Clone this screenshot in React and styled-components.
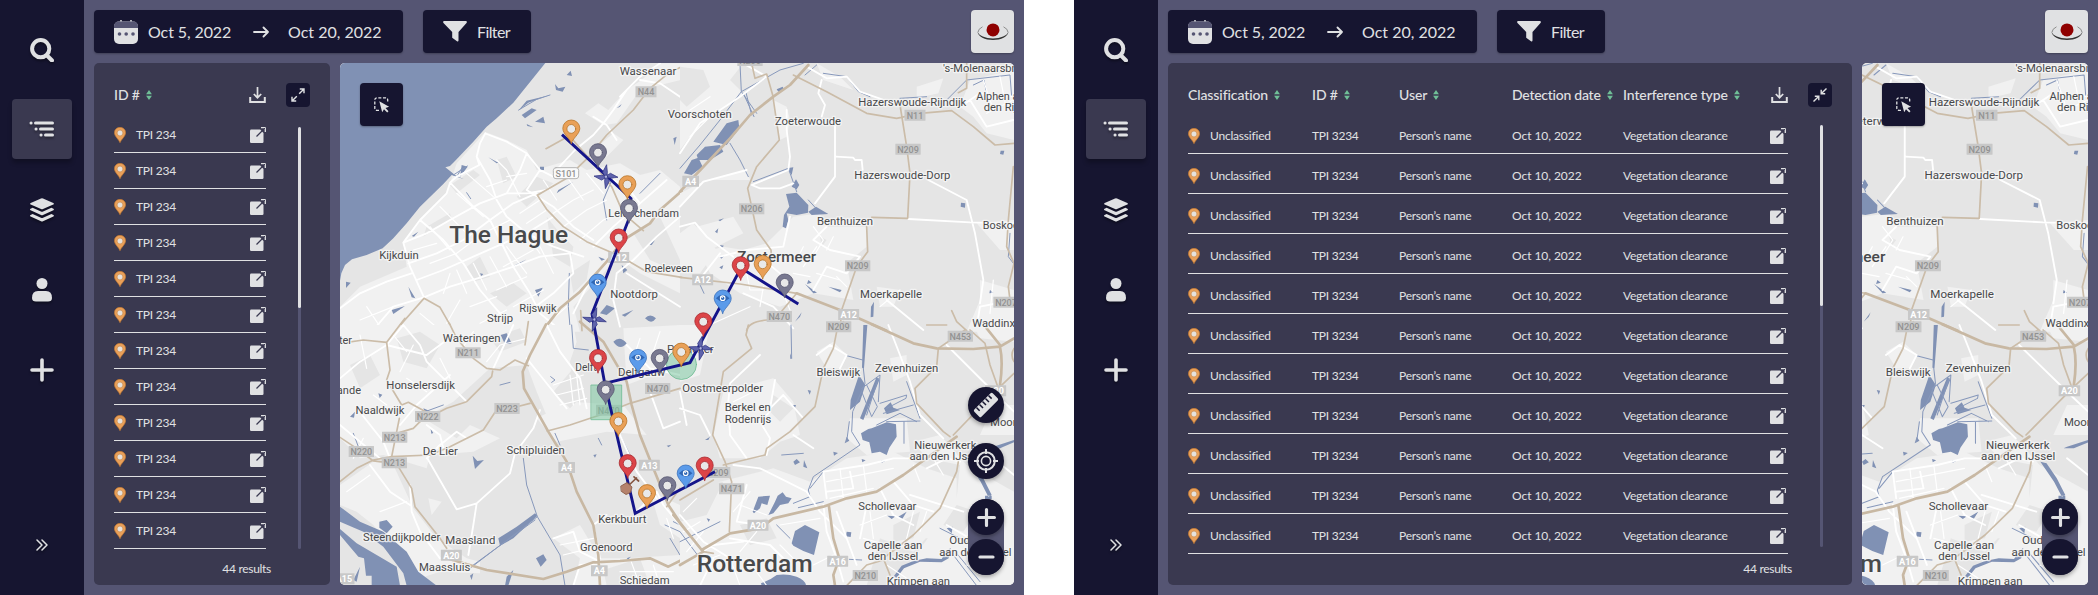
import React from "react";
import styled, { createGlobalStyle } from "styled-components";

const c = {
  navy: "#161530",
  slate: "#555573",
  panel: "#3a3950",
  light: "#e0e1e3",
  green: "#6fbf97",
  orange: "#e9a05a",
};

const Global = createGlobalStyle`
  * { box-sizing: border-box; }
  body { margin: 0; background: #fff; font-family: Lato, "Liberation Sans", sans-serif; color: ${c.light}; }
  svg { display: block; flex: none; }
`;

const Page = styled.div`
  display: flex;
  justify-content: space-between;
  width: 2098px;
  height: 595px;
  overflow: hidden;
`;
const Screen = styled.section`
  display: flex;
  width: 1024px;
  height: 595px;
  background: ${c.slate};
`;
const Sidebar = styled.nav`
  display: flex;
  flex-direction: column;
  align-items: center;
  gap: 20px;
  width: 84px;
  padding: 19px 0 20px;
  background: ${c.navy};
`;
const NavItem = styled.div`
  display: flex;
  align-items: center;
  justify-content: center;
  width: 60px;
  height: 60px;
  padding-top: ${(p) => (p.$active ? 0 : 2)}px;
  border-radius: 4px;
  background: ${(p) => (p.$active ? c.panel : "transparent")};
  box-shadow: ${(p) => (p.$active ? "0 4px 4px rgba(0,0,0,.25)" : "none")};
  svg { filter: drop-shadow(0 2px 1px rgba(0, 0, 0, 0.35)); }
`;
const NavFooter = styled(NavItem)`
  margin-top: auto;
  padding-top: 0;
`;
const Main = styled.main`
  display: flex;
  flex-direction: column;
  flex: 1;
  gap: 10px;
  padding: 10px;
`;
const TopBar = styled.header`
  display: flex;
  gap: 20px;
  height: 43px;
`;
const BarBox = styled.div`
  display: flex;
  align-items: center;
  height: 43px;
  width: ${(p) => p.$w}px;
  padding-left: 20px;
  border-radius: 4px;
  background: ${c.navy};
  box-shadow: 0 1px 2px rgba(0, 0, 0, 0.25);
`;
const BarText = styled.span`
  width: ${(p) => p.$w}px;
  margin-left: ${(p) => p.$ml}px;
  padding-top: ${(p) => p.$pt || 0}px;
  font-size: 16px;
  line-height: 20px;
  letter-spacing: ${(p) => p.$ls ?? 0}px;
  white-space: nowrap;
`;
const LogoBox = styled.div`
  display: flex;
  align-items: center;
  justify-content: center;
  width: 43px;
  height: 43px;
  margin-left: auto;
  border-radius: 4px;
  background: ${c.light};
  box-shadow: 0 1px 2px rgba(0, 0, 0, 0.25);
`;
const Content = styled.div`
  display: flex;
  gap: 10px;
  height: 522px;
`;
const Panel = styled.div`
  width: ${(p) => p.$w}px;
  height: 522px;
  padding: 20px 20px 0;
  border-radius: 5px;
  background: ${c.panel};
`;
const PanelHead = styled.div`
  display: flex;
  align-items: center;
  height: 24px;
`;
const HeadCell = styled.div`
  display: flex;
  align-items: center;
  gap: 6px;
  width: ${(p) => p.$w}px;
  font-size: 14px;
  font-weight: 500;
  line-height: 20px;
  letter-spacing: ${(p) => p.$ls ?? -0.1}px;
  white-space: nowrap;
`;
const SquareButton = styled.div`
  display: flex;
  align-items: center;
  justify-content: center;
  width: 24px;
  height: 24px;
  margin-left: 20px;
  border-radius: 4px;
  background: ${c.navy};
`;
const ListArea = styled.div`
  display: flex;
  margin-top: ${(p) => (p.$wide ? 7 : 10)}px;
`;
const Rows = styled.div`
  width: ${(p) => p.$w}px;
`;
const Row = styled.div`
  display: flex;
  align-items: center;
  height: ${(p) => p.$h}px;
  padding-top: ${(p) => p.$pt}px;
  border-bottom: 1px solid ${c.light};
`;
const Cell = styled.span`
  width: ${(p) => p.$w}px;
  font-size: 12px;
  line-height: 16px;
  letter-spacing: ${(p) => p.$ls ?? -0.25}px;
  white-space: nowrap;
`;
const PinSlot = styled.span`
  width: 22px;
`;
const OpenSlot = styled.span`
  margin-left: auto;
  margin-right: ${(p) => p.$mr || 0}px;
`;
const Track = styled.div`
  width: 3px;
  height: 422px;
  margin: ${(p) => (p.$wide ? "11px 0 0 32px" : "10px 0 0 32px")};
  border-radius: 2px;
  background: ${c.slate};
`;
const Thumb = styled.div`
  height: 181px;
  border-radius: 2px;
  background: ${c.light};
`;
const Results = styled.div`
  width: ${(p) => p.$w}px;
  margin-top: ${(p) => p.$mt}px;
  text-align: right;
  font-size: 12px;
  line-height: 16px;
  letter-spacing: -0.3px;
`;
const MapBox = styled.div`
  position: relative;
  flex: 1;
  height: 522px;
  border-radius: 5px;
  overflow: hidden;
  background: #e5e5e5;
`;
const SelectTool = styled.div`
  position: absolute;
  left: 20px;
  top: 20px;
  display: flex;
  align-items: center;
  justify-content: center;
  width: 43px;
  height: 43px;
  border-radius: 4px;
  background: ${c.navy};
  box-shadow: 0 1px 2px rgba(0, 0, 0, 0.3);
`;
const MapTools = styled.div`
  position: absolute;
  right: 10px;
  bottom: 10px;
  display: flex;
  flex-direction: column;
  gap: 20px;
`;
const RoundButton = styled.div`
  display: flex;
  align-items: center;
  justify-content: center;
  width: 36px;
  height: 36px;
  border-radius: 50%;
  background: ${c.navy};
  box-shadow: 0 2px 4px rgba(0, 0, 0, 0.35);
`;
const ZoomGroup = styled.div`
  display: flex;
  flex-direction: column;
  gap: 4px;
  border-radius: 18px;
  background: ${c.slate};
`;

/* ---------- icons ---------- */
const SearchIcon = () => (
  <svg width="24" height="24" viewBox="0 0 24 24" fill="none" stroke={c.light}>
    <circle cx="10.7" cy="10.7" r="8.6" strokeWidth="4" />
    <path d="M17 17.5l5 5" strokeWidth="4" strokeLinecap="round" />
  </svg>
);
const ListIcon = () => (
  <svg width="26" height="16" viewBox="0 0 26 16" fill="none" stroke={c.light} strokeWidth="3" strokeLinecap="round">
    <path d="M2 2h.1M6.5 2h17M7 8h.1M11.500 8h12M12 14h.1M16.500 14h7" />
  </svg>
);
const LayersIcon = () => (
  <svg width="24" height="24" viewBox="0 0 24 24" fill={c.light}>
    <path d="M11 .4q1-.5 2 0l10.300 4.500q1.300.8 0 1.600L13 11q-1 .5-2 0L.7 6.500q-1.300-.8 0-1.600z" />
    <path d="M2.600 9.800l8.300 3.700q1.100.5 2.200 0l8.300-3.700 2 .9q1.200.8 0 1.500L13 17q-1 .5-2 0L.6 12.200q-1.200-.8 0-1.500z" />
    <path d="M2.600 16.100l8.300 3.700q1.100.5 2.200 0l8.300-3.700 2 .9q1.200.8 0 1.500L13 23.300q-1 .5-2 0L.6 18.500q-1.200-.8 0-1.500z" />
  </svg>
);
const UserIcon = () => (
  <svg width="20" height="24" viewBox="0 0 20 24" fill={c.light}>
    <circle cx="10" cy="5.500" r="5.500" />
    <path d="M6 13h8q6 0 6 7 0 3.500-4 3.500H4q-4 0-4-3.500 0-7 6-7z" />
  </svg>
);
const PlusIcon = ({ size = 24, w = 3.6 }) => (
  <svg width={size} height={size} viewBox="0 0 24 24" stroke={c.light} strokeWidth={w} strokeLinecap="round">
    <path d="M12 2v20M2 12h20" />
  </svg>
);
const ChevronsIcon = () => (
  <svg width="12" height="12" viewBox="0 0 12 12" fill="none" stroke={c.light} strokeWidth="1.500" strokeLinecap="round" strokeLinejoin="round">
    <path d="M1 1l5 5-5 5M6 1l5 5-5 5" />
  </svg>
);
const CalendarIcon = () => (
  <svg width="24" height="24" viewBox="0 0 24 24">
    <path d="M7 0v4M17 0v4" stroke={c.light} strokeWidth="1.500" />
    <rect y="1.500" width="24" height="22.500" rx="5" fill={c.light} />
    <path d="M0 8V6.500q0-5 5-5h14q5 0 5 5V8z" fill={c.slate} />
    <g fill={c.slate}>
      <circle cx="5.500" cy="14" r="1.800" />
      <circle cx="12.200" cy="14" r="1.800" />
      <circle cx="19" cy="14" r="1.800" />
    </g>
  </svg>
);
const ArrowIcon = () => (
  <svg width="16" height="12" viewBox="0 0 16 12" fill="none" stroke={c.light} strokeWidth="1.800" strokeLinecap="round" strokeLinejoin="round">
    <path d="M1 6h14M10.500 1.500L15 6l-4.500 4.500" />
  </svg>
);
const FunnelIcon = () => (
  <svg width="24" height="21" viewBox="0 0 24 21" fill={c.light}>
    <path d="M.8 0h22.400q1.200.8.3 2L15.500 11v8.500q-.2 1.500-1.500.8l-4.800-3.600V11L.5 2Q-.4.8.8 0z" />
  </svg>
);
const LogoIcon = () => (
  <svg width="32" height="18" viewBox="0 0 32 18">
    <path d="M5.500 3.800Q1 6 1 9.300M26.500 3.800Q31 6 31 9.300" fill="none" stroke="#777" strokeWidth=".8" />
    <path d="M.6 8.500C.8 13.800 8 17 16 17s15.200-3.200 15.400-8.500C30.400 12.800 23.500 15.400 16 15.400S1.600 12.800.6 8.500z" fill="#333" />
    <circle cx="16" cy="6.900" r="6.500" fill="#8f0000" />
  </svg>
);
const SortIcon = () => (
  <svg width="6" height="10" viewBox="0 0 6 10" fill={c.green}>
    <path d="M3 0l2.900 4.300H.1zM3 10L.1 5.700h5.800z" />
  </svg>
);
const DownloadIcon = () => (
  <svg width="17" height="16" viewBox="0 0 17 16" fill="none" stroke={c.light} strokeWidth="1.700">
    <path d="M8.500 0v10.500M4.800 7l3.700 3.700L12.200 7" />
    <path d="M1.200 10v5h14.600v-5" strokeWidth="2" />
  </svg>
);
const ResizeIcon = ({ collapse }) => (
  <svg width="14" height="14" viewBox="0 0 14 14" fill="none" stroke={c.light} strokeWidth="1.400">
    {collapse ? (
      <path d="M0.500 13.500L5.600 8.400M1.800 8.200h4v4M13.500.5L8.400 5.600M8.200 1.800v4h4" />
    ) : (
      <path d="M1 13L5.800 8.200M1 8.800V13h4.200M13 1L8.200 5.800M8.800 1H13v4.200" />
    )}
  </svg>
);
const OpenIcon = () => (
  <svg width="16" height="16" viewBox="0 0 16 16">
    <path d="M1.200 2.500h9L13.500 6v8.800q0 1.200-1.200 1.200H1.200Q0 16 0 14.800V3.700q0-1.200 1.200-1.200z" fill={c.light} />
    <path d="M6.500 9.500L14 2" stroke={c.panel} strokeWidth="1.300" />
    <path d="M11 .7h4.300V5" fill="none" stroke={c.light} strokeWidth="1.300" />
    <path d="M10.800 5.200L15.300.7" stroke={c.panel} strokeWidth="1" />
  </svg>
);
const SmallPin = () => (
  <svg width="12" height="16" viewBox="0 0 18 24">
    <path d="M9 23.500C7 18 .6 14 .6 8.600a8.400 8.200 0 0 1 16.800 0C17.400 14 11 18 9 23.500z" fill={c.orange} stroke="#c57a30" strokeWidth="1" />
    <circle cx="9" cy="9" r="4.400" fill="#e6e2de" stroke="#c57a30" strokeWidth=".8" />
  </svg>
);
const SelectIcon = () => (
  <svg width="16" height="16" viewBox="0 0 16 16">
    <path d="M5 13.300H3q-2.200 0-2.200-2.200V3Q.8.8 3 .8h8.500q2.200 0 2.200 2.200v1.500" fill="none" stroke={c.light} strokeWidth="1.300" strokeDasharray="3 1.600" />
    <path d="M5.300 4.300l9.800 5.500-3.600 1.100 3 3.300-1.300 1.300-3.200-3.200-1.800 3z" fill={c.light} />
  </svg>
);
const RulerIcon = () => (
  <svg width="26" height="26" viewBox="0 0 26 26">
    <g transform="rotate(-45 13 13)">
      <rect x="0" y="8" width="26" height="10" rx="1.500" fill={c.light} />
      <path d="M4.500 8v4.500M8.800 8v5M13 8v5M17.200 8v5M21.500 8v4.500" stroke={c.navy} strokeWidth="1.500" />
    </g>
  </svg>
);
const TargetIcon = () => (
  <svg width="24" height="24" viewBox="0 0 24 24" fill="none" stroke={c.light} strokeWidth="2">
    <circle cx="12" cy="12" r="8.800" />
    <circle cx="12" cy="12" r="4.600" strokeWidth="1.600" />
    <path d="M12 0v5M12 19v5M0 12h5M19 12h5" />
  </svg>
);
const MinusIcon = () => (
  <svg width="17" height="4" viewBox="0 0 17 4" stroke={c.light} strokeWidth="3.200" strokeLinecap="round">
    <path d="M2 2h13" />
  </svg>
);

/* ---------- map data: four tiles, three units per pixel ---------- */
const TILES = [
  {
    at: [340, 60],
    urban:
      "M436,216 L350,310 L320,400 L240,480 L190,545 L200,620 L60,680 L0,740 V815 H720 L700,740 L790,640 L830,590 L900,640 L1020,700 V380 L960,330 L900,345 L840,310 L740,330 L690,300 L620,320 L590,330 L560,270 L500,240Z M735,160 L775,130 L805,150 L860,90 L905,60 L960,10 L1022,10 V60 L900,90 L830,190 L790,195Z M760,270 L820,220 L850,240 L800,290Z",
    park:
      "M470,300 L500,290 L530,350 L490,370Z M330,375 L400,330 L420,345 L350,400Z M530,410 L590,350 L640,370 L560,440Z M380,620 L420,590 L450,650 L400,665Z M620,470 L660,520 L700,560 L690,620 L640,590Z M260,500 L330,460 L335,475 L250,530Z M450,700 L520,670 L560,700 L500,740Z M880,520 L960,470 L1020,600 V640 L930,600Z M690,640 L750,600 L740,660 L700,700Z",
    water:
      "M0,9 H616 L520,128 L470,175 L440,200 L400,245 L345,303 L330,318 L316,322 L345,345 L372,358 L335,345 L310,372 L240,440 L200,490 L160,535 L128,565 L80,585 L36,598 L15,615 L4,640 L0,662Z M545,165 L575,145 L590,150 L555,175Z M534,153 L560,122 L628,106 L565,128Z M585,185 L610,170 L615,190Z M560,192 L580,202 L562,198Z M645,72 L655,85 L676,80 L668,95 L648,90Z M680,45 L692,32 L696,48Z M365,315 L383,320 L360,350Z M830,145 L845,132 L840,140Z M600,320 h12 v10 h-12Z M655,390 L700,365 L650,400Z M585,690 L608,683 L595,710Z M18,665 L32,668 L18,684Z M205,680 L226,715 L215,712Z M155,750 L195,738 L160,762Z M445,292 L475,308 L470,310Z M370,400 L390,418Z M520,618 L560,598 L522,622Z M915,775 Q930,758 948,775 Q935,795 915,775Z M800,735 L825,745 L800,765 L780,760Z M845,615 L862,630 L850,640Z M775,590 L795,598 L785,602Z M1010,230 l-6,25 l-4,-20Z M215,528 L235,515 L222,530Z M420,640 l10,2 l-6,6Z M845,765 l35,-15 l-25,20Z M925,555 l20,-14 l-10,14Z",
    thinWater: "M340,345 L382,318 M350,350 L365,325 M820,350 L790,420 L800,480 M690,800 L685,740 L688,640 M380,398 L392,416 M900,400 L960,340 M536,150 L590,118 L630,105",
    minor:
      "M436,220 L420,250 L410,290 L418,315 L350,350 L330,368 L320,400 L240,480 L190,548 L210,620 L252,712 M440,222 L500,245 L560,280 L600,330 L640,350 L700,345 M190,548 L260,520 L330,480 L420,430 L500,400 L560,400 L620,390 M410,290 L450,360 L470,420 L500,470 L560,520 L640,560 L730,590 M330,368 L400,440 L450,480 L480,540 L520,620 L570,700 L600,760 L660,810 M240,480 L310,540 L370,610 L420,690 L480,760 L520,810 M205,610 L290,580 L370,540 L450,480 L520,430 L590,400 M230,660 L310,630 L400,590 L490,550 L560,520 L640,470 M252,712 L330,680 L430,650 L520,620 L600,590 L690,580 L700,640 L640,700 L560,760 M0,745 L60,700 L140,665 L215,640 M100,810 L160,740 L252,712 M560,280 L540,330 L500,400 M600,330 L560,390 L640,440 L700,500 L760,540 M860,90 L820,150 L790,190 L760,225 L705,270 M960,10 L900,50 L840,110 M760,170 L800,195 L830,240 M1020,110 L960,70 L900,60 M705,270 L640,340 M980,360 L900,430 L820,500 L760,560 M900,430 L860,380 L800,350 M1020,470 L950,530 L880,600 L830,640 L820,720 L840,800 M770,640 L740,680 L700,760 M860,640 L940,690 L1020,740",
    fine:
      "M300,440 L380,520 M350,400 L430,470 M380,340 L460,410 M270,500 L330,570 M470,300 L500,330 L540,410 M430,520 L510,480 M350,580 L430,520 M270,610 L350,580 M310,700 L330,640 M380,700 L350,630 M440,690 L400,610 M500,680 L450,590 M560,640 L500,560 M600,580 L550,510 M640,640 L590,540 M490,620 L580,570 M470,690 L560,650 M520,740 L610,690 M390,740 L470,710 M420,790 L500,750 M600,810 L680,740 M640,460 L700,420 L760,390 M670,500 L740,450 L800,420 M720,540 L790,480 L840,460 M610,360 L650,420 M680,350 L730,420 M740,340 L790,400 M220,570 L290,550 M500,350 L560,340 M440,380 L500,360 M240,760 L300,810 M60,780 L160,740 M120,800 L80,740 M320,790 L360,720 M540,460 L600,420 M560,490 L620,450",
    tan: "M672,236 L618,266 M592,406 L680,355 L745,292 L800,225 L880,150 L930,85 L985,40 L1025,20 M592,406 L620,448 L670,500 L740,545 L820,580 M690,230 L760,310 L815,380 L850,460 L910,512 M168,810 L252,715 L300,742 L340,812 M722,752 L726,812 M860,600 L920,635 L1025,652",
    tanWide: "M1025,393 L960,450 L930,490 L850,540 L800,605 L720,695 L660,745 L608,812",
    shields: [["N44", 918, 96], ["S101", 678, 340, "s"], ["A12", 836, 593]],
    labels: [
      ["Wassenaar", 924, 46, 170], ["The Hague", 506, 548, 356, 69], ["Kijkduin", 177, 597, 119], ["Leidschendam", 911, 472, 212],
      ["Roeleveen", 986, 635, 145], ["Nootdorp", 882, 714, 143], ["Rijswijk", 594, 757, 112], ["Strijp", 480, 786, 78], ["Voorschoten", 1079, 174, 192],
    ],
  },
  {
    at: [680, 60],
    urban:
      "M0,10 H190 L150,60 L190,100 L60,190 L0,270Z M280,120 L300,240 L320,230 L330,180 L320,140Z M340,470 L420,460 L440,500 L560,500 L560,560 L500,610 L520,720 L400,700 L300,740 L180,700 L90,640 L60,580 L130,560 L190,570 L260,550 L310,500Z M840,140 L870,60 L1002,30 V240 L920,220 L880,170Z M710,80 L790,55 L775,100 L710,115Z M890,490 L1002,480 V570 L960,570Z M900,660 L1002,690 V815 H860 L900,720Z M0,400 L60,370 L200,330 L210,360 L80,360 L0,440Z M590,680 L660,690 L640,740 L600,740Z M50,500 L160,470 L190,520 L90,570Z M0,520 L40,490 L110,570 L60,640 L0,640Z M410,10 L480,50 L520,90 L430,60Z",
    park: "M0,20 L70,30 L90,80 L20,140 L0,120Z M140,720 L240,730 L220,790 L130,800Z M420,530 L440,540 L425,560Z",
    water:
      "M100,245 L140,190 L175,180 L178,205 L140,255Z M50,285 L75,260 L120,255 L130,275 L90,300 L55,300Z M12,340 L35,300 L55,293 L68,320 L35,345Z M318,402 L350,398 L385,435 L384,458 L350,465 L320,460 L325,480 L318,505 L308,500 L312,465 L328,440Z M385,455 L408,440 L445,462 L395,465Z M320,325 L340,322 L335,345Z M348,358 L358,375 L350,388 L335,380Z M290,88 L308,80 L312,88 L295,95Z M843,428 L856,430 L855,443 L842,440Z M962,272 L973,272 L970,284 L960,282Z M115,480 L132,475 L120,484Z M105,515 L115,505 L112,520Z M120,555 l12,2 l-8,8Z M118,590 l14,-2 l-8,8Z M118,622 l12,-6 l-4,12Z M375,672 L411,698 L400,700Z M385,660 l10,8 l-14,4Z M445,680 L485,690 L480,697Z M345,785 L365,757 L360,770Z M573,740 L582,725 L580,770 L572,772Z M930,690 l10,8 l-12,2Z",
    thinWater: "M180,10 L184,95 L230,160 M190,100 L222,170 M198,98 L215,165 M0,325 L60,255 L120,180 L184,95 L300,30 L370,10 M150,250 L180,300 L205,350 M430,40 L500,50 L535,95 L570,110 M660,115 L740,110 M800,120 L860,60 L990,45 L995,110 M880,75 L912,60 L918,90 M220,365 L325,325 L350,395 M385,420 L408,445 M990,520 L985,590 L1000,610 M58,670 L72,700 M375,45 L410,15",
    minor:
      "M0,280 L60,190 L180,110 L260,50 L190,10 M465,190 V350 L405,430 M468,290 L520,293 L525,300 L545,300 L548,330 M685,477 L870,487 L1002,490 M745,360 L860,420 L885,520 L910,660 L900,730 M320,150 L320,210 L330,290 L325,330 L215,375 L240,385 L300,385 L340,370 M380,20 L440,55 L500,50 L540,95 L640,130 M425,60 L415,100 L435,135 L425,170 M330,470 L310,560 L200,570 L120,590 M440,500 L400,540 L450,570 L540,590 M540,590 L500,640 L440,620 L400,690 M0,500 L45,488 L80,530 L160,590 M180,600 L240,590 L300,640 M50,670 L120,580 M0,440 L70,365 L200,330 M840,140 L900,100 L1000,110 M870,120 L920,200 L1000,180 M620,720 L730,810 M890,800 L900,740 L1002,720 M190,700 L280,740 L340,805",
    fine:
      "M400,500 L430,540 L400,590 M460,530 L440,570 M470,650 L500,680 M410,640 L480,660 M910,60 L940,150 M960,50 L980,150 M920,160 L1000,120 M250,680 L240,740 M200,640 L210,690 L250,690 M310,700 L330,750 M0,170 L90,110 M30,230 L110,150 M100,790 L210,740 M370,620 L410,560 M340,640 L390,650 M350,600 L370,560 M940,660 L930,760 M600,740 L660,690",
    tan: "M215,10 L225,55 L260,42 L278,105 L298,240 L230,320 L203,385 L230,510 L273,570 L275,600 M340,45 L440,95 L560,160 L650,175 L720,160 L815,152 L880,200 L945,255 L1005,250 M660,135 L680,260 L690,340 L683,475 L575,472 M560,500 L563,575 L530,620 L485,750 L480,812 M0,652 L180,672 L350,700 M350,700 L300,760 M860,10 L860,85 L835,98 M1000,320 L985,480 L980,560 L1002,610 L985,680 L990,720 M815,752 L830,785 L860,812 M200,812 Q205,785 260,780",
    tanWide: "M0,395 L75,315 L150,235 L210,165 L280,110 L330,75 L385,15 M350,700 L480,750 L620,812",
    shields: [["N206", 210, 2], ["N11", 705, 166], ["N209", 684, 268], ["A4", 32, 364], ["N206", 215, 447], ["N209", 533, 618], ["A12", 68, 660], ["N470", 298, 770], ["A12", 506, 764], ["N207", 978, 727], ["N209", 476, 801]],
    labels: [
      ["'s-Molenaarsbrug", 916, 37, 254], ["Hazerswoude-Rijndijk", 697, 138, 324], ["Alphen aan", 970, 121, 162], ["den Rijn", 970, 154, 118], ["Zoeterwoude", 384, 194, 198],
      ["Hazerswoude-Dorp", 667, 357, 288], ["Benthuizen", 495, 494, 168], ["Boskoop", 972, 508, 127], ["Zoetermeer", 290, 607, 237, 43], ["Moerkapelle", 633, 714, 186], ["Waddinxveen", 976, 800, 198],
    ],
  },
  {
    at: [340, 325],
    urban:
      "M0,0 H700 L710,50 L690,110 L700,170 L690,250 L640,320 L590,200 L560,120 L450,130 L340,230 L250,280 L350,340 L390,300 L480,340 L400,380 L270,390 L260,430 L130,390 L60,400 L0,340Z M0,480 L100,410 L160,420 L220,550 L290,640 L380,700 L420,710 L420,745 L300,740 L240,760 L180,700 L100,600 L50,560 L0,540Z M640,640 L720,600 L780,700 L860,700 L1020,690 V782 H700 L720,700Z M265,520 L305,530 L275,570Z M590,280 L690,230 L850,240 L920,330 L800,320 L650,350Z M930,500 L1020,540 V640 L960,600Z M850,10 L1020,0 V120 L860,180Z",
    park: "M170,40 L240,20 L300,60 L260,130 L190,110Z M450,40 L540,10 L560,50 L480,80Z M30,120 L90,90 L120,150 L60,190Z M790,735 L900,700 L930,782 L800,782Z M640,200 L700,130 L720,220 L690,250Z",
    water:
      "M0,545 L60,590 L130,620 L200,680 L235,740 L290,782 L200,782 L190,745 L130,665 L70,620 L0,590Z M0,612 L50,655 L110,690 L170,725 L180,782 H95 V752 H78 L72,700 L55,695 L0,630Z M118,590 L140,585 L158,605 L140,625 L118,608Z M475,640 L530,605 L585,565 L592,572 L520,640 L480,662Z M398,392 L412,408 L432,405 L405,432Z M588,700 L610,688 L620,705 L602,725Z M820,50 Q840,30 860,55 Q840,80 820,50Z M482,30 L500,25 L515,55 L495,58Z M30,275 L45,260 L42,278Z M500,755 L520,735 L505,782 H495Z M760,390 L770,388 L765,398Z M980,362 l14,-3 l-8,8Z M860,700 l12,-5 l-6,10Z M272,312 l8,12 l-6,2Z M115,205 l12,4 l-8,10Z M40,765 L60,725 L50,770Z M390,752 L400,745 L395,765Z M250,250 L285,265 L255,262Z",
    thinWater: "M550,400 L560,480 L592,575 L560,600 L390,730 M592,575 L660,690 L675,782 M585,585 L400,720 M40,325 L55,365 L65,370 M695,0 L700,70 L745,75 M250,262 L310,240 M775,340 L785,360 M645,325 L660,360 M1000,590 L1020,600 M990,640 L1020,690 M1020,620 L975,600 M480,180 L510,172 M632,155 L645,165 L635,172 M830,310 L870,390",
    minor:
      "M600,255 L580,310 L525,385 L510,445 L410,535 L350,553 L262,400 M410,535 L400,600 L385,690 M0,300 L60,350 L120,400 M55,255 L130,350 L150,400 M0,160 L60,110 L140,60 L260,90 L340,30 M140,60 L190,0 M190,0 L240,60 L260,110 L380,230 M330,150 L230,240 L180,300 M460,130 L520,0 M560,100 L600,150 L680,250 M620,0 L660,80 L720,160 L740,250 M210,480 L215,560 L240,620 L300,700 M90,420 L150,500 L210,540 M640,640 L700,620 L720,680 L780,710 M890,560 L950,500 L970,540 L1020,600 M930,200 L970,310 L1020,290 M860,60 L930,130 L1020,150 M800,570 L760,600 L780,700 M380,340 L350,320 L300,360 L260,400 M700,782 L720,720 L780,715 M260,300 L300,330 L310,370 M820,270 L840,330 L890,440 L950,520",
    fine:
      "M160,30 L200,80 M220,60 L180,140 M60,30 L80,130 M100,210 L140,240 M200,160 L260,200 M300,100 L330,160 M400,20 L360,80 M440,110 L480,60 L560,40 M640,180 L730,150 M650,210 L730,190 M660,240 L740,220 M690,150 L700,240 M710,150 L720,240 M870,700 L900,782 M940,720 L960,782 M840,740 L1000,740 M660,660 L760,640 M670,690 L750,670 M980,580 L1000,640 M900,40 L880,100 M960,20 L940,80 M20,500 L90,450 M120,560 L200,530 M40,400 L70,340",
    tan: "M0,55 L70,45 L140,52 L150,135 L140,165 L185,240 L205,232 L260,262 M140,52 L195,-20 M328,-5 L350,40 L400,100 L440,130 L480,135 L525,105 L565,122 M565,-10 L555,60 M458,138 L455,155 L380,230 L320,250 L240,290 L220,310 L170,325 M178,280 L155,395 M0,470 L50,430 L100,405 L155,395 L270,390 L330,365 L430,315 L465,262 L570,235 M0,337 L50,370 L100,408 L140,412 M175,425 L215,490 L225,545 L300,640 L320,670 M622,318 L690,300 L780,270 L870,235 L1020,190 M1020,490 L980,545",
    tanWide: "M618,-2 L570,90 L548,140 L552,190 L625,320 L680,410 L710,500 L760,600 L775,690 L780,782 M320,700 L440,735 L610,762 L680,740 L760,712 L840,708 L930,700 L985,725 L1025,705 M720,-10 L790,50 L860,170 L875,240 L900,330 L940,430 L985,540 L1025,600",
    shields: [["N211", 384, 84], ["N223", 501, 251], ["N222", 263, 275], ["N213", 164, 337], ["N220", 64, 380], ["N213", 163, 414], ["A4", 680, 428], ["A13", 928, 421], ["N470", 953, 191], ["N470", 806, 256], ["A20", 334, 691], ["A4", 778, 738], ["A15", 12, 762]],
    labels: [
      ["Wateringen", 395, 52, 173], ["Monster", -25, 56, 122], ["Honselersdijk", 242, 191, 206], ["'s-Gravenzande", -48, 208, 222], ["Naaldwijk", 120, 268, 147], ["De Lier", 301, 391, 105], ["Schipluiden", 587, 386, 175],
      ["Delft", 738, 139, 64], ["Delfgauw", 905, 153, 142], ["Kerkbuurt", 847, 593, 145], ["Groenoord", 799, 679, 158], ["Schiedam", 914, 776, 150], ["Steendijkpolder", 185, 648, 232], ["Maasland", 391, 656, 150], ["Maassluis", 314, 739, 154], ["Pijnacker", 1051, 84, 140],
    ],
  },
  {
    at: [680, 325],
    urban:
      "M130,200 L280,160 L340,230 L360,330 L300,350 L240,400 L120,400 L100,330Z M0,540 L120,470 L280,430 L390,470 L500,400 L640,380 L740,430 L830,460 L830,540 L700,680 L600,640 L560,782 H0Z M430,440 L560,400 L660,400 L700,480 L620,520 L450,530Z M700,350 L780,330 L860,420 L1002,500 V782 H620 L700,700 L830,520 L840,420 L740,400Z M410,80 L460,50 L500,90 L480,130 L440,130Z M880,0 L1002,0 V50 L900,40Z M630,100 L680,90 L680,150 L640,170Z M940,240 L1002,240 V330 L900,330Z M0,0 H90 L60,150 L0,170Z M690,520 L870,560 L860,640 L700,640Z M510,280 L680,280 L690,380 L560,390 L500,340Z",
    park: "M180,600 L260,580 L290,640 L210,660Z M0,490 L130,470 L80,570 L0,590Z M280,210 L340,250 L300,290 L270,260Z M640,600 L720,560 L700,640 L640,650Z M830,540 L890,560 L850,620 L790,600Z",
    water:
      "M550,0 L562,0 L552,130 L546,128Z M537,150 L556,180 L540,230 L510,255 L512,225Z M590,155 L598,165 L550,285 L540,280Z M543,325 L565,312 L575,310 L620,292 L648,298 L650,335 L628,368 L620,390 L600,380 L575,385 L568,352 L548,345Z M335,655 L345,618 L375,600 L418,622 L402,690 L370,678 L340,662Z M265,570 L285,530 L293,512 L308,502 L318,515 L335,520 L325,535 L300,540 L280,565Z M218,560 L235,515 L270,512 L262,540 L245,535 L240,550 L222,565Z M243,775 L272,762 L290,750 Q320,745 350,755 Q375,765 378,780 H300 L245,782Z M500,620 l14,2 l-2,14 l-14,-2Z M612,250 L632,232 L640,248 L660,255 L620,268Z M336,240 h12 l-4,12Z M383,195 l10,2 l-4,12Z M340,410 L350,402 L360,412 L345,420Z M372,405 L382,430 L370,425Z M622,572 l25,2 l-12,8Z M655,575 L680,560 L665,585Z M862,410 L902,470 L925,515 L935,510 L910,460 L880,415Z M915,512 h20 v10 h-20Z M940,365 L1002,345 V352 L960,370 L930,370Z M800,610 L818,605 L815,625Z M500,335 l8,12 l-14,8Z M460,380 l14,4 l-12,8Z M545,402 l12,4 l-10,6Z M605,405 l10,4 l-10,4Z M75,345 L90,335 L85,345Z M80,580 l10,3 l-4,8Z M330,85 l6,15 l-5,2Z M640,755 L665,722 L700,708 L740,700 L785,702 L795,685 L812,668 L806,700 L785,712 L720,710 L672,730 L650,758Z",
    thinWater: "M333,0 L335,100 M550,130 L555,175 L518,260 L515,320 L540,360 L400,455 L385,495 L390,515 L340,535 M500,92 L548,105 M595,160 L560,270 M560,180 L592,245 L575,275 L545,200 M545,190 L600,150 L595,230 M600,235 L680,210 L678,220 L620,250 M590,300 L660,265 L710,290 M610,265 L700,240 M672,290 V355 M508,290 L500,350 M0,650 L120,590 M0,620 L60,700 M305,390 L370,385 M430,440 L390,490 M820,690 L890,782 M830,685 L900,770 M290,600 L330,640 M508,703 L545,705 M355,548 L430,530 M680,170 L720,280 M780,610 L860,650 M620,290 L720,288",
    minor:
      "M240,90 L150,175 L145,230 L150,330 L200,400 M285,165 L270,250 L310,210 L370,280 M270,260 L240,290 L270,340 L260,390 M625,0 L660,90 L690,170 L720,270 L790,340 M800,60 L950,210 L1002,260 M160,420 L240,430 L380,500 L420,560 L500,640 M430,540 L440,620 L470,700 L490,770 M430,440 L560,420 L640,400 L700,400 M430,440 L440,520 M510,440 L520,490 L440,500 M560,540 L540,640 M470,560 L530,720 M600,490 L640,570 L700,600 M640,470 L700,540 L760,560 M0,570 L70,650 L150,700 M150,640 L270,660 L330,720 M200,480 L170,590 L240,600 M0,720 L100,660 L190,650 M60,782 L100,700 M740,430 L800,400 L840,410 M690,510 L850,560 M800,600 L870,640 M1002,450 L940,400 M0,250 L60,270 L90,330 M0,200 L20,300 M340,330 L400,370 M410,90 L450,60 L500,90 L480,130",
    fine:
      "M440,470 L640,430 M450,520 L580,490 M550,420 L560,500 M480,430 L490,520 M180,540 L260,570 M210,500 L160,560 M10,620 L60,590 M20,680 L70,620 M40,720 L120,690 M180,680 L230,620 M300,600 L420,580 M300,660 L340,700 M400,720 L460,690 M540,600 L620,570 M550,640 L620,660 M570,560 L580,640 M700,560 L680,640 M740,560 L720,620 M620,720 L680,760 M860,720 L900,740 M150,700 L180,782 M200,700 L260,782 M10,560 L50,520 M700,420 L720,470 M760,400 L790,450 M160,230 L220,200 M170,290 L220,280",
    tan: "M205,0 L198,30 L215,70 L130,140 L125,170 L98,330 L135,410 L155,470 L148,620 M470,20 L460,70 L430,130 L405,245 L330,320 L260,370 L255,390 L130,420 M0,525 L100,465 M490,-10 L475,15 M855,15 L775,70 L770,125 L705,190 L710,235 L790,320 L810,335 M835,410 L830,440 L780,550 L700,630 L610,700 L630,750 M740,0 L800,0 M870,15 L915,55 L930,120 L955,190 L1002,145 M955,190 L820,330 M610,705 L560,720 L500,782 M1002,70 Q990,90 1002,110 M0,590 L70,680 L100,685",
    tanWide: "M575,-2 L700,55 L770,70 L880,72 L960,65 L1002,40 M960,65 Q970,110 960,180 M920,10 L960,60 M70,680 L0,720 M65,675 L150,625 L240,610 L280,580 L430,545 L500,520 L590,500 L670,450 L830,335 M65,675 L-20,570 M447,545 L460,640 L478,700 L460,750 L465,782",
    shields: [["N453", 841, 34], ["A20", 947, 198], ["N209", 113, 443], ["N471", 155, 492], ["A20", 234, 601], ["A16", 473, 709], ["N210", 556, 752]],
    labels: [
      ["Bleiswijk", 475, 154, 131], ["Zevenhuizen", 680, 140, 190], ["Oostmeerpolder", 128, 200, 243], ["Berkel en", 203, 259, 138], ["Rodenrijs", 204, 294, 140], ["Nieuwerkerk", 796, 371, 186], ["aan den IJssel", 797, 405, 217],
      ["Moordrecht", 1017, 302, 172], ["Schollevaar", 622, 554, 174], ["Capelle aan", 639, 671, 176], ["den IJssel", 639, 705, 152], ["Ouderkerk", 886, 656, 156], ["aan den IJssel", 886, 692, 217], ["Krimpen aan", 715, 780, 190], ["Rotterdam", 224, 742, 348, 69],
    ],
  },
];

const MapLabel = styled.text`
  font-family: Roboto, sans-serif;
  font-weight: ${(p) => (p.$big ? 500 : 400)};
  text-anchor: middle;
  fill: #48494b;
  stroke: #f6f6f6;
  stroke-width: 8px;
  stroke-linejoin: round;
  stroke-opacity: 0.8;
  paint-order: stroke;
`;
const ShieldText = styled.text`
  font-family: Roboto, sans-serif;
  font-size: 27px;
  font-weight: ${(p) => (p.$motorway ? 700 : 500)};
  text-anchor: middle;
  fill: ${(p) => (p.$motorway ? "#fff" : "#929292")};
`;

const tileTransform = (t) => `translate(${t.at[0]} ${t.at[1]}) scale(.33333)`;

const shieldWidth = (name) => name.length * 13 + 24;

const Shield = ({ data: [name, x, y, kind] }) => {
  const w = shieldWidth(name);
  return (
    <g>
      <rect x={x - w / 2} y={y - 17} width={w} height="33" rx={kind ? 8 : 1} fill={kind ? "#fafafa" : "#c8c8c8"} stroke={kind ? "#b5b5b5" : "none"} strokeWidth="3" />
      <ShieldText x={x} y={y + 10} $motorway={name[0] === "A"}>{name}</ShieldText>
    </g>
  );
};

const PIN_COLORS = {
  orange: ["#e9a057", "#b87529"],
  gray: ["#787890", "#555570"],
  red: ["#dc4448", "#a82b30"],
  blue: ["#5b9bea", "#3a70bb"],
};
const PINS = [
  [571.3, 143.6, "orange"], [598, 167.3, "gray"], [627.4, 199.3, "orange"], [629, 223, "gray"], [618.7, 252.6, "red"], [597.7, 297.7, "blue"],
  [762.7, 279, "orange"], [740.7, 280.3, "red"], [784.7, 297.6, "gray"], [722.7, 313.6, "blue"], [703.3, 336.4, "red"],
  [598, 373, "red"], [638, 373, "blue"], [659.7, 373, "gray"], [681.3, 366.7, "orange"], [605.7, 404.4, "gray"], [618.4, 436.2, "orange"],
  [627.7, 478.2, "red"], [647, 508.2, "orange"], [667.4, 500.3, "gray"], [685.7, 488.6, "blue"], [704.7, 480.6, "red"],
];
const MapPin = ({ x, y, color }) => {
  const [fill, edge] = PIN_COLORS[color];
  return (
    <g transform={`translate(${x - 9} ${y - 24})`}>
      <path d="M9 23.800C8 19 .5 14.500 .5 8.700a8.500 8.300 0 0 1 17 0C17.500 14.500 10 19 9 23.800z" fill={fill} stroke={edge} strokeWidth=".8" />
      {color === "blue" ? (
        <g>
          <path d="M2.200 8.600Q9 1.800 15.800 8.600 9 15 2.200 8.600z" fill="#2f66b4" />
          <circle cx="9" cy="8.600" r="2.300" fill="#2f66b4" stroke="#fff" strokeWidth="1.100" />
          <circle cx="8.500" cy="7.900" r=".7" fill="#fff" />
        </g>
      ) : (
        <circle cx="9" cy="9.300" r="4.400" fill="#e9e9e9" stroke={edge} strokeWidth=".8" />
      )}
    </g>
  );
};
const Windmill = ({ x, y, r = 0 }) => (
  <g transform={`translate(${x} ${y}) rotate(${r})`} fill="#5f63ac" stroke="#2d3180" strokeWidth=".7">
    {[0, 90, 180, 270].map((a) => (
      <path key={a} d="M-.8 0L-3.400-4.500 .6-12 1.400-4.500 .8 0z" transform={`rotate(${a})`} />
    ))}
    <circle r="1.700" fill="#b4b7e0" />
  </g>
);

const MapArt = ({ width, view, overlay }) => {
  const [vx, vy, vw, vh] = view;
  /* true when a label of width w, centred at (x, y) in tile t, reaches into the view */
  const inView = (t, x, y, w) => {
    const px = t.at[0] + x / 3;
    const py = t.at[1] + y / 3;
    return px + w / 6 > vx + 1 && px - w / 6 < vx + vw && py > vy - 3 && py < vy + vh + 6;
  };
  return (
    <svg width={width} height="522" viewBox={view.join(" ")} preserveAspectRatio="none" strokeLinejoin="round" strokeLinecap="round">
      <rect x="340" y="60" width="680" height="530" fill="#e5e5e5" />
      {TILES.map((t, i) => (
        <g key={i} transform={tileTransform(t)} fill="none">
          <path d={t.urban} fill="#f1f1f1" />
          <path d={t.park} fill="#e5e5e5" />
          <path d={t.water} fill="#8091b4" />
          <path d={t.thinWater} stroke="#8798bb" strokeWidth="3" />
          <path d={t.fine} stroke="#fff" strokeWidth="3.500" />
          <path d={t.minor} stroke="#fff" strokeWidth="5.500" />
          <path d={t.tan} stroke="#cbbca8" strokeWidth="5" />
          <path d={t.tanWide} stroke="#c8b8a3" strokeWidth="8" />
        </g>
      ))}
      {TILES.map((t, i) => (
        <g key={i} transform={tileTransform(t)}>
          {t.shields.filter(([name, x, y]) => inView(t, x, y, shieldWidth(name))).map((s, k) => <Shield key={k} data={s} />)}
          {t.labels.filter(([, x, y, w]) => inView(t, x, y, w)).map(([name, x, y, w, size = 33], k) => (
            <MapLabel key={k} x={x} y={y} fontSize={size} textLength={w} lengthAdjust="spacingAndGlyphs" $big={size > 33}>{name}</MapLabel>
          ))}
        </g>
      ))}
      {overlay && (
        <g>
          <g fill="#7cc6a0" fillOpacity=".55" stroke="#6cba92" strokeWidth=".8">
            <rect x="591.300" y="385" width="30.400" height="34.700" />
            <circle cx="681.500" cy="364.500" r="15" />
          </g>
          <path d="M562 134.600L631 198.500 628.500 220 592 314 604.700 383.300 635.200 513.300 715 471.700M604.700 383.300L690 362.700 741 268 798.300 304" fill="none" stroke="#14148a" strokeWidth="2.900" strokeLinejoin="miter" strokeLinecap="butt" />
          <Windmill x={606} y={176.7} />
          <Windmill x={594.5} y={319.5} r={8} />
          <Windmill x={700.7} y={348.3} r={4} />
          <g fill="#b5826c" stroke="#85543f" strokeWidth=".8">
            <path d="M627 487l9.500-9m-2.500-1.200l4.600 4.200" strokeWidth="1.700" />
            <path d="M621 486l6-3.500 5 4.500-1.500 5.500-4.500 2-4.500-3z" />
          </g>
          {PINS.map(([x, y, color], i) => <MapPin key={i} x={x} y={y} color={color} />)}
        </g>
      )}
    </svg>
  );
};

/* ---------- page parts ---------- */
const Navigation = () => (
  <Sidebar>
    <NavItem><SearchIcon /></NavItem>
    <NavItem $active><ListIcon /></NavItem>
    <NavItem><LayersIcon /></NavItem>
    <NavItem><UserIcon /></NavItem>
    <NavItem><PlusIcon /></NavItem>
    <NavFooter><ChevronsIcon /></NavFooter>
  </Sidebar>
);

const Toolbar = () => (
  <TopBar>
    <BarBox $w={309}>
      <CalendarIcon />
      <BarText $w={105} $ml={10} $ls={-0.1}>Oct 5, 2022</BarText>
      <ArrowIcon />
      <BarText $w={95} $ml={19} $pt={1} $ls={0}>Oct 20, 2022</BarText>
    </BarBox>
    <BarBox $w={108}>
      <FunnelIcon />
      <BarText $w={34} $ml={10} $pt={1} $ls={-0.6}>Filter</BarText>
    </BarBox>
    <LogoBox><LogoIcon /></LogoBox>
  </TopBar>
);

const CompactPanel = () => (
  <Panel $w={236}>
    <PanelHead>
      <HeadCell $w={135}>ID # <SortIcon /></HeadCell>
      <DownloadIcon />
      <SquareButton><ResizeIcon /></SquareButton>
    </PanelHead>
    <ListArea>
      <Rows $w={152}>
        {Array.from({ length: 12 }, (_, i) => (
          <Row key={i} $h={36} $pt={1}>
            <PinSlot><SmallPin /></PinSlot>
            <Cell>TPI 234</Cell>
            <OpenSlot><OpenIcon /></OpenSlot>
          </Row>
        ))}
      </Rows>
      <Track><Thumb /></Track>
    </ListArea>
    <Results $w={157} $mt={12}>44 results</Results>
  </Panel>
);

const FullPanel = () => (
  <Panel $w={684}>
    <PanelHead>
      <HeadCell $w={124}>Classification <SortIcon /></HeadCell>
      <HeadCell $w={87}>ID # <SortIcon /></HeadCell>
      <HeadCell $w={113}>User <SortIcon /></HeadCell>
      <HeadCell $w={111} $ls={-0.25}>Detection date <SortIcon /></HeadCell>
      <HeadCell $w={148}>Interference type <SortIcon /></HeadCell>
      <DownloadIcon />
      <SquareButton><ResizeIcon collapse /></SquareButton>
    </PanelHead>
    <ListArea $wide>
      <Rows $w={600}>
        {Array.from({ length: 11 }, (_, i) => (
          <Row key={i} $h={40} $pt={5}>
            <PinSlot><SmallPin /></PinSlot>
            <Cell $w={102} $ls={-0.2}>Unclassified</Cell>
            <Cell $w={87} $ls={-0.25}>TPI 3234</Cell>
            <Cell $w={113}>Person’s name</Cell>
            <Cell $w={111} $ls={-0.05}>Oct 10, 2022</Cell>
            <Cell $w={120}>Vegetation clearance</Cell>
            <OpenSlot $mr={2}><OpenIcon /></OpenSlot>
          </Row>
        ))}
      </Rows>
      <Track $wide><Thumb /></Track>
    </ListArea>
    <Results $w={604} $mt={7}>44 results</Results>
  </Panel>
);

const ZoomControls = () => (
  <ZoomGroup>
    <RoundButton><PlusIcon size={19} w={4} /></RoundButton>
    <RoundButton><MinusIcon /></RoundButton>
  </ZoomGroup>
);

export default function App() {
  return (
    <>
      <Global />
      <Page>
        <Screen>
          <Navigation />
          <Main>
            <Toolbar />
            <Content>
              <CompactPanel />
              <MapBox>
                <MapArt width={674} view={[340, 63, 674, 522]} overlay />
                <SelectTool><SelectIcon /></SelectTool>
                <MapTools>
                  <RoundButton><RulerIcon /></RoundButton>
                  <RoundButton><TargetIcon /></RoundButton>
                  <ZoomControls />
                </MapTools>
              </MapBox>
            </Content>
          </Main>
        </Screen>
        <Screen>
          <Navigation />
          <Main>
            <Toolbar />
            <Content>
              <FullPanel />
              <MapBox>
                <MapArt width={226} view={[793.3, 63, 220.5, 522]} />
                <SelectTool><SelectIcon /></SelectTool>
                <MapTools><ZoomControls /></MapTools>
              </MapBox>
            </Content>
          </Main>
        </Screen>
      </Page>
    </>
  );
}
